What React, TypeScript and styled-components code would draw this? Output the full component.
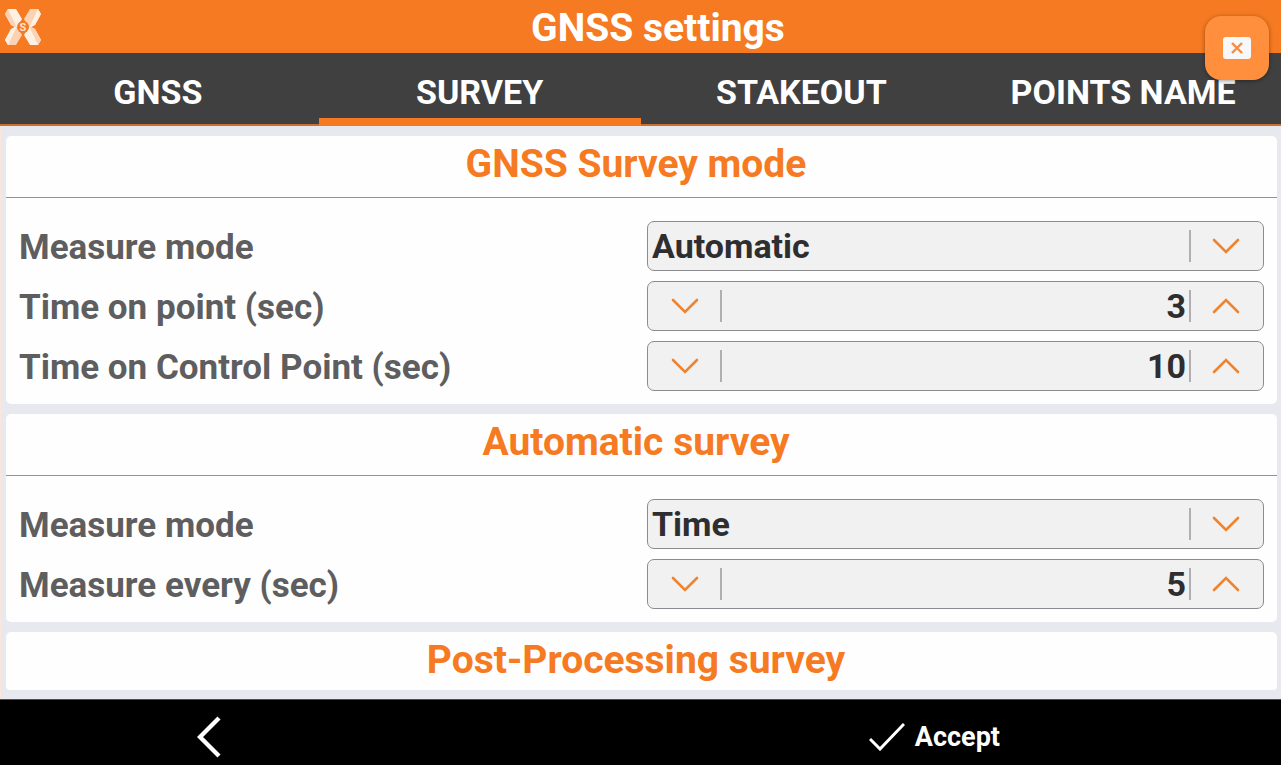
import React, { useState } from "react";
import styled, { createGlobalStyle } from "styled-components";

const orange = "#f57a21";

const GlobalStyle = createGlobalStyle`
  *, *::before, *::after { box-sizing: border-box; }
  body { margin: 0; background: #e8e9ee; font-family: Roboto, "Liberation Sans", sans-serif; }
  button, input, select { font: inherit; color: inherit; margin: 0; padding: 0; border: 0; background: none; }
`;

const Page = styled.div`
  position: relative;
  display: flex;
  flex-direction: column;
  height: 100vh;
  overflow: hidden;
`;

const Header = styled.header`
  display: flex;
  align-items: center;
  flex: none;
  height: 53px;
  padding: 0 5px;
  background: ${orange};
`;

const Logo = styled.svg`
  flex: none;
  width: 36px;
  height: 36px;
`;

const Title = styled.h1`
  flex: 1;
  margin: 0 0 0 0;
  padding: 3px 1px 0 0;
  color: #fff;
  font-size: 39px;
  line-height: 44px;
  font-weight: 700;
  text-align: center;
`;

const Tabs = styled.nav`
  flex: none;
  display: grid;
  grid-template-columns: repeat(4, 1fr);
  height: 73px;
  margin: 0 -3px;
  background: #404040;
  border-bottom: 2px solid #c96f30;
`;

const Tab = styled.button<{ $active: boolean }>`
  height: 73px;
  padding-top: 12px;
  border-bottom: 8px solid ${(p) => (p.$active ? orange : "transparent")};
  color: #fff;
  font-size: 34px;
  line-height: 40px;
  font-weight: 700;
  cursor: pointer;
`;

const CloseButton = styled.button`
  position: absolute;
  top: 16px;
  right: 12px;
  display: grid;
  place-items: center;
  width: 64px;
  height: 64px;
  border-radius: 16px;
  background: #ff8f3c;
  box-shadow: 0 1px 4px rgba(0, 0, 0, 0.4);
  cursor: pointer;
`;

const Body = styled.main`
  flex: 1;
  min-height: 0;
  display: flex;
  padding: 10px 4px 9px 5px;
  border-left: 1px solid #fbe6dc;
`;

const Scroller = styled.div`
  flex: 1;
  overflow-y: auto;
  scrollbar-width: none;
  border-radius: 4px;
`;

const Card = styled.section`
  margin-bottom: 10px;
  border-radius: 5px;
  background: #fefefe;

  &:last-child { margin-bottom: 0; }
`;

const CardTitle = styled.h2`
  height: 61px;
  margin: 0;
  padding: 5px 11px 0 0;
  color: ${orange};
  font-size: 39px;
  line-height: 46px;
  font-weight: 700;
  text-align: center;
`;

const Rows = styled.div`
  display: grid;
  row-gap: 10px;
  padding: 23px 13px 13px;
  border-top: 1px solid #bd8662;
`;

const Row = styled.div`
  display: grid;
  grid-template-columns: 1fr 1fr;
  column-gap: 11px;
  align-items: center;
`;

const Label = styled.label`
  padding-top: 3px;
  color: #5e5e60;
  font-size: 35px;
  line-height: 40px;
  font-weight: 700;
`;

const Field = styled.div`
  display: grid;
  grid-template-columns: 1fr;
  align-items: center;
  height: 50px;
  border: 1px solid #8c8c8e;
  border-radius: 7px;
  background: #f1f1f1;
  color: #2e2e30;
  font-size: 34px;
  line-height: 40px;
  font-weight: 700;
`;

const StepperField = styled(Field)`
  grid-template-columns: 74px 1fr 74px;
`;

const Select = styled.select`
  grid-area: 1 / 1;
  width: 100%;
  height: 48px;
  padding: 0 76px 0 4px;
  appearance: none;
  outline: none;
`;

const NumberInput = styled.input`
  width: 100%;
  min-width: 0;
  height: 48px;
  padding-right: 3px;
  text-align: right;
  outline: none;
`;

const SelectMark = styled.span`
  grid-area: 1 / 1;
  justify-self: end;
  display: grid;
  place-items: center;
  width: 74px;
  height: 32px;
  padding-right: 2px;
  border-left: 2px solid #b0b0b2;
  pointer-events: none;
`;

const StepButton = styled.button<{ $side: "left" | "right" }>`
  display: grid;
  place-items: center;
  height: 32px;
  padding-${(p) => p.$side}: 2px;
  border-${(p) => (p.$side === "left" ? "right" : "left")}: 2px solid #b0b0b2;
  cursor: pointer;
`;

const Footer = styled.footer`
  flex: none;
  display: grid;
  grid-template-columns: 5fr 2fr 8fr;
  height: 66px;
  background: #000;
  border-top: 1px solid #4a5252;
`;

const FooterButton = styled.button`
  display: flex;
  align-items: center;
  justify-content: center;
  gap: 10px;
  padding: 8px 10px 0 0;
  color: #fff;
  font-size: 27px;
  line-height: 32px;
  font-weight: 700;
  cursor: pointer;

  &:last-child { grid-column: 3; }
`;

const Chevron = ({ up = false }: { up?: boolean }) => (
  <svg width="28" height="16" viewBox="0 0 28 16" fill="none" stroke="#ee8430" strokeWidth="2.6" strokeLinecap="round" aria-hidden="true">
    <path d={up ? "M2 14 14 2 26 14" : "M2 2 14 14 26 2"} />
  </svg>
);

function SelectRow({ id, label, options }: { id: string; label: string; options: string[] }) {
  return (
    <Row>
      <Label htmlFor={id}>{label}</Label>
      <Field>
        <Select id={id} defaultValue={options[0]}>
          {options.map((o) => (
            <option key={o}>{o}</option>
          ))}
        </Select>
        <SelectMark>
          <Chevron />
        </SelectMark>
      </Field>
    </Row>
  );
}

function StepperRow({ id, label, initial }: { id: string; label: string; initial: number }) {
  const [value, setValue] = useState(initial);
  return (
    <Row>
      <Label htmlFor={id}>{label}</Label>
      <StepperField>
        <StepButton $side="left" type="button" aria-label="Decrease" onClick={() => setValue(Math.max(0, value - 1))}>
          <Chevron />
        </StepButton>
        <NumberInput
          id={id}
          inputMode="numeric"
          value={value}
          onChange={(e) => setValue(Number(e.target.value.replace(/\D/g, "")))}
        />
        <StepButton $side="right" type="button" aria-label="Increase" onClick={() => setValue(value + 1)}>
          <Chevron up />
        </StepButton>
      </StepperField>
    </Row>
  );
}

const tabs = ["GNSS", "SURVEY", "STAKEOUT", "POINTS NAME"];

export default function App() {
  const [active, setActive] = useState("SURVEY");
  return (
    <Page>
      <GlobalStyle />
      <Header>
        <Logo viewBox="0 0 36 36" aria-hidden="true">
          <path d="M0 5 3 0h8l6 10-5 9-6-3z" fill="#fff0e4" />
          <path d="M0 5 3 0 12 19 6 16z" fill="#fbd3b4" />
          <path d="M36 5 33 0h-8l-6 10 5 9 6-3z" fill="#fbd3b4" />
          <path d="M36 5 33 0 24 19l6-3z" fill="#fff0e4" />
          <path d="M0 31 3 36h8l6-10-5-9-6 3z" fill="#fbd3b4" />
          <path d="M0 31 3 36 12 17 6 20z" fill="#fff0e4" />
          <path d="M36 31 33 36h-8l-6-10 5-9 6 3z" fill="#fff0e4" />
          <path d="M36 31 33 36 24 17l6 3z" fill="#fbd3b4" />
          <circle cx="18" cy="18" r="6" fill={orange} />
          <text x="18" y="22" textAnchor="middle" fontSize="11" fontWeight="700" fill="#fde3d0">S</text>
        </Logo>
        <Title>GNSS settings</Title>
      </Header>
      <Tabs>
        {tabs.map((t) => (
          <Tab key={t} type="button" $active={t === active} onClick={() => setActive(t)}>
            {t}
          </Tab>
        ))}
      </Tabs>
      <Body>
        <Scroller>
          <Card>
            <CardTitle>GNSS Survey mode</CardTitle>
            <Rows>
              <SelectRow id="mode" label="Measure mode" options={["Automatic", "Manual"]} />
              <StepperRow id="point" label="Time on point (sec)" initial={3} />
              <StepperRow id="control" label="Time on Control Point (sec)" initial={10} />
            </Rows>
          </Card>
          <Card>
            <CardTitle>Automatic survey</CardTitle>
            <Rows>
              <SelectRow id="auto-mode" label="Measure mode" options={["Time", "Distance"]} />
              <StepperRow id="every" label="Measure every (sec)" initial={5} />
            </Rows>
          </Card>
          <Card>
            <CardTitle>Post-Processing survey</CardTitle>
          </Card>
        </Scroller>
      </Body>
      <Footer>
        <FooterButton type="button" aria-label="Back">
          <svg width="24" height="42" viewBox="0 0 24 42" fill="none" stroke="#fff" strokeWidth="4.4" aria-hidden="true">
            <path d="M22 2 3 21 22 40" />
          </svg>
        </FooterButton>
        <FooterButton type="button">
          <svg width="36" height="28" viewBox="0 0 36 28" fill="none" stroke="#fff" strokeWidth="3" aria-hidden="true">
            <path d="M1 16 11 26 35 1" />
          </svg>
          Accept
        </FooterButton>
      </Footer>
      <CloseButton type="button" aria-label="Close">
        <svg width="28" height="22" viewBox="0 0 28 22" aria-hidden="true">
          <rect width="28" height="22" rx="3" fill="#f8f8fa" />
          <path d="M9 6 19 16M19 6 9 16" stroke="#f98a3a" strokeWidth="2.4" fill="none" />
        </svg>
      </CloseButton>
    </Page>
  );
}
